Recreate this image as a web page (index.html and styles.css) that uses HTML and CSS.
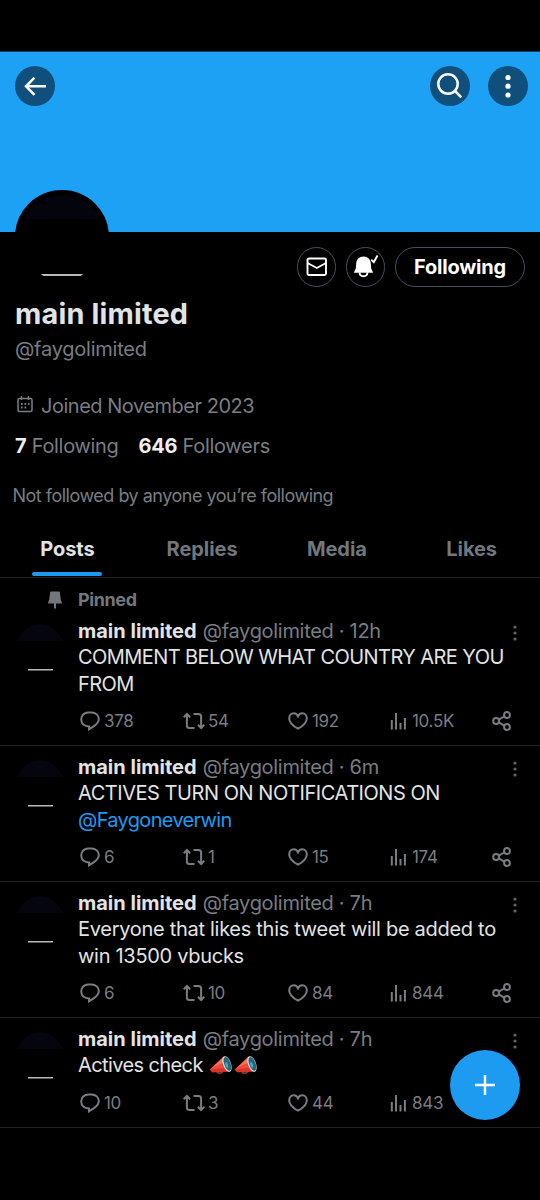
FILE: index.html
```html
<!DOCTYPE html>
<html lang="en">
<head>
<meta charset="utf-8">
<title>main limited (@faygolimited)</title>
<link rel="stylesheet" href="styles.css">
</head>
<body>
<svg class="sprite" aria-hidden="true">
  <symbol id="reply" viewBox="0 0 20 20"><path d="M9 15.400C4.200 15.300 1.200 12.600 1.200 8.600c0-4.100 3-7.100 7.300-7.100h3c4.300 0 7.300 2.800 7.300 6.600 0 3.300-2.300 5.400-4.800 7L9 18.300z"/></symbol>
  <symbol id="repost" viewBox="0 0 22 18"><path d="M.7 5.200 3.900 2l3.200 3.200M3.900 2.200v11.300q0 2.500 2.500 2.500h5.100M10.500 2h5.100q2.500 0 2.500 2.500v11.300M14.900 12.800l3.200 3.200 3.200-3.200"/></symbol>
  <symbol id="heart" viewBox="0 0 20 18"><path d="M10 16.700C5 13.900 1.200 10.500 1.200 6.400c0-3 2-5.100 4.500-5.100 1.800 0 3.300.9 4.300 2.900 1-2 2.500-2.900 4.300-2.900 2.500 0 4.500 2.100 4.500 5.100 0 4.100-3.800 7.500-8.800 10.300z"/></symbol>
  <symbol id="views" viewBox="0 0 17 18"><path d="M1.800 17.500V8M6 17.500V1M10.500 17.500v-6.500M14.900 17.500V6"/></symbol>
  <symbol id="share" viewBox="0 0 20 20"><path d="m6.700 8.700 5.600-3.200M6.700 11.400l5.600 3.200"/><circle cx="4.100" cy="10" r="2.900"/><circle cx="15" cy="4" r="2.900"/><circle cx="15" cy="16" r="2.900"/></symbol>
  <symbol id="more" viewBox="0 0 6 16"><circle cx="3" cy="2" r="1.600"/><circle cx="3" cy="8" r="1.600"/><circle cx="3" cy="14" r="1.600"/></symbol>
  <symbol id="horn" viewBox="0 0 24 20">
    <path d="M7.500 15q0 3.300 3 3.300t3.300-3" fill="none" stroke="#a9322b" stroke-width="1.500"/>
    <path d="M.6 14.500 14.500 1.500l6.500 14.800-17.500 1z" fill="#ef4a3a"/>
    <path d="m.6 14.500 2.900 2.800 17.500-1-2-4z" fill="#d8362c"/>
    <path d="m3.500 12.500 11-10 2 4z" fill="#ff7456"/>
    <ellipse cx="18" cy="9" rx="4" ry="8.200" transform="rotate(-20 18 9)" fill="#d8e3e8"/>
    <ellipse cx="18.400" cy="8.900" rx="3.200" ry="7.300" transform="rotate(-20 18.400 8.900)" fill="#25667d"/>
    <ellipse cx="17.600" cy="10" rx="1.300" ry="3" transform="rotate(-20 17.600 10)" fill="#4ca5b0"/>
  </symbol>
</svg>
<header class="banner">
  <button class="round" aria-label="Back"><svg width="40" height="40" viewBox="0 0 40 40"><path d="M31 20.300H11M19.500 11.700 11 20.300l8.500 8.600"/></svg></button>
  <span class="spacer"></span>
  <button class="round" aria-label="Search"><svg width="40" height="40" viewBox="0 0 40 40"><circle cx="18" cy="18" r="9.700"/><path d="m25 25 6.300 6.300"/></svg></button>
  <button class="round" aria-label="More"><svg class="dots" width="40" height="40" viewBox="0 0 40 40"><circle cx="20" cy="11.500" r="2.600"/><circle cx="20" cy="20.200" r="2.600"/><circle cx="20" cy="29" r="2.600"/></svg></button>
  <div class="profile-pic"><span></span></div>
</header>
<section class="profile">
  <div class="buttons">
    <button class="outline" aria-label="Message"><svg width="22" height="20" viewBox="0 0 22 20"><rect x="1.500" y="1.500" width="18.500" height="16.500" rx="1.500"/><path d="m1.500 6 9.250 5L20 6"/></svg></button>
    <button class="outline" aria-label="Notifications"><svg width="26" height="24" viewBox="0 0 26 24"><path fill="#fff" stroke="none" d="M10.500 1.500c4.500 0 7 3 7.300 7l.4 5 2 4.200H.8l2-4.200.4-5c.3-4 2.800-7 7.300-7z"/><path d="M6.500 17.500c.5 5 7.500 5 8 0M18.300 4.700l2.500 2.500L24.500.5" stroke-width="1.900"/></svg></button>
    <button class="outline wide">Following</button>
  </div>
  <h1>main limited</h1>
  <p class="handle">@faygolimited</p>
  <p class="joined"><svg width="16" height="17" viewBox="0 0 16 17"><rect x="1" y="2.500" width="14" height="13" rx="1.500"/><path d="M4.500 0v4M11.500 0v4"/><path stroke-width="2" stroke-dasharray="1.700 1.800" d="M4 8h8.500M4 11.500h5.500"/></svg><span>Joined November 2023</span></p>
  <p class="counts"><span><b>7</b> Following</span><span><b>646</b> Followers</span></p>
  <p class="mutual">Not followed by anyone you’re following</p>
</section>
<nav class="tabs"><a class="active"><span>Posts</span></a><a><span>Replies</span></a><a><span>Media</span></a><a><span>Likes</span></a></nav>
<main>
  <div class="pinned"><svg width="14" height="19" viewBox="0 0 14 19"><path d="M3 .5h8q.8 0 .9.800l.8 7 1.100 3v1.200H8v4.500l-1 1-1-1V12.500H.2v-1.200l1.100-3 .8-7Q2.200.5 3 .5z"/></svg><span>Pinned</span></div>
  <article class="post">
    <div class="avatar"></div>
    <div class="body">
      <div class="meta"><b>main limited</b><span>@faygolimited · 12h</span><svg class="more"><use href="#more"/></svg></div>
      <p class="text caps">COMMENT BELOW WHAT COUNTRY ARE YOU<br>FROM</p>
      <div class="actions"><span><svg class="i-reply"><use href="#reply"/></svg>378</span><span><svg class="i-repost"><use href="#repost"/></svg>54</span><span><svg class="i-heart"><use href="#heart"/></svg>192</span><span><svg class="i-views"><use href="#views"/></svg>10.5K</span><span><svg class="i-share"><use href="#share"/></svg></span></div>
    </div>
  </article>
  <article class="post">
    <div class="avatar"></div>
    <div class="body">
      <div class="meta"><b>main limited</b><span>@faygolimited · 6m</span><svg class="more"><use href="#more"/></svg></div>
      <p class="text"><span class="caps loose">ACTIVES TURN ON NOTIFICATIONS ON</span><br><a class="mention">@Faygoneverwin</a></p>
      <div class="actions"><span><svg class="i-reply"><use href="#reply"/></svg>6</span><span><svg class="i-repost"><use href="#repost"/></svg>1</span><span><svg class="i-heart"><use href="#heart"/></svg>15</span><span><svg class="i-views"><use href="#views"/></svg>174</span><span><svg class="i-share"><use href="#share"/></svg></span></div>
    </div>
  </article>
  <article class="post">
    <div class="avatar"></div>
    <div class="body">
      <div class="meta"><b>main limited</b><span>@faygolimited · 7h</span><svg class="more"><use href="#more"/></svg></div>
      <p class="text">Everyone that likes this tweet will be added to<br>win 13500 vbucks</p>
      <div class="actions"><span><svg class="i-reply"><use href="#reply"/></svg>6</span><span><svg class="i-repost"><use href="#repost"/></svg>10</span><span><svg class="i-heart"><use href="#heart"/></svg>84</span><span><svg class="i-views"><use href="#views"/></svg>844</span><span><svg class="i-share"><use href="#share"/></svg></span></div>
    </div>
  </article>
  <article class="post">
    <div class="avatar"></div>
    <div class="body">
      <div class="meta"><b>main limited</b><span>@faygolimited · 7h</span><svg class="more"><use href="#more"/></svg></div>
      <p class="text emoji-line"><span>Actives check</span><svg class="horn"><use href="#horn"/></svg><svg class="horn"><use href="#horn"/></svg></p>
      <div class="actions"><span><svg class="i-reply"><use href="#reply"/></svg>10</span><span><svg class="i-repost"><use href="#repost"/></svg>3</span><span><svg class="i-heart"><use href="#heart"/></svg>44</span><span><svg class="i-views"><use href="#views"/></svg>843</span></div>
    </div>
  </article>
</main>
<button class="compose" aria-label="New post"><svg width="20" height="20" viewBox="0 0 20 20"><path d="M10 0v20M0 10h20"/></svg></button>
</body>
</html>
```
FILE: styles.css
```css
* { box-sizing: border-box; }
body { margin: 0; padding-top: 51px; height: 1200px; overflow: hidden; background: #000; color: #e2e3e4; font: 20px/26px Inter, sans-serif; position: relative; }
h1, p { margin: 0; white-space: nowrap; }
button { font: inherit; color: #fff; padding: 0; border: 0; display: flex; align-items: center; justify-content: center; }
svg { display: block; flex: none; fill: none; stroke: currentColor; }
.sprite { position: absolute; width: 0; height: 0; }
.banner { position: relative; height: 180.500px; background: #1da1f4; border-top: 1px solid #0b4267; display: flex; gap: 17.5px; padding: 14px 12.5px 0 15px; overflow: hidden; }
.spacer { flex: 1; }
.round { width: 40px; height: 40px; border-radius: 50%; background: #104f7b; }
.round svg { stroke-width: 2.5; }
.round .dots { fill: #fff; stroke: none; }
.profile-pic { position: absolute; left: 15px; top: 137.500px; width: 94px; height: 94px; border-radius: 50%; border: 5px solid #000; background: #04040c; overflow: hidden; }
.profile-pic span { display: block; margin-top: 24px; height: 60px; background: #000; }
.profile { position: relative; height: 291px; padding: 15px 15px 0; color: #797d82; }
.profile::before { content: ""; position: absolute; left: 40px; top: 42px; width: 44px; height: 2.500px; background: #b9b9b9; clip-path: polygon(0 0, 100% 0, 92% 100%, 8% 100%); }
.buttons { display: flex; justify-content: flex-end; gap: 10px; }
.outline { width: 39px; height: 40px; background: #000; border: 1px solid #42515e; border-radius: 20px; }
.outline svg { stroke-width: 1.9; }
.outline.wide { width: 130px; font-weight: 700; letter-spacing: -.2px; }
h1 { font-size: 28.800px; line-height: 34px; font-weight: 700; color: #e2e3e4; margin-top: 10px; letter-spacing: .2px; }
.handle { margin-top: 5px; letter-spacing: -.23px; }
.joined { display: flex; align-items: center; gap: 8px; margin-top: 31px; padding-left: 2px; letter-spacing: -.48px; }
.joined svg { margin-top: -3px; stroke-width: 1.5; }
.counts { display: flex; gap: 20px; margin-top: 14px; letter-spacing: -.3px; }
.counts b { color: #eee; }
.mutual { font-size: 18px; margin: 24px 0 0 -2.500px; letter-spacing: -.5px; }
.tabs { height: 55px; display: grid; grid-template-columns: repeat(4, 1fr); border-bottom: 1px solid #202224; font-weight: 700; color: #72777c; letter-spacing: -.05px; padding: 13px 1px 0 0; }
.tabs a { display: flex; flex-direction: column; align-items: center; }
.tabs .active { color: #e2e3e4; }
.tabs .active::after { content: ""; width: 70px; height: 4px; border-radius: 2px; background: #1d9bf0; margin-top: 10.500px; }
.pinned { height: 32.500px; display: flex; gap: 16px; padding: 9.500px 0 0 48px; color: #72777c; font-weight: 700; font-size: 18px; letter-spacing: -.4px; }
.pinned svg { fill: currentColor; stroke: none; margin-top: 4px; }
.post { display: flex; border-bottom: 1px solid #202224; padding: 8px 0 11px 17px; }
.avatar { width: 46px; height: 48px; border-radius: 23px 23px 0 0; margin: 6px 15px 0 0; background: linear-gradient(#b9b9b9, #b9b9b9) 11px 44.500px / 25px 1.500px no-repeat, linear-gradient(#05050d 17px, #000 17px); }
.body { flex: 1; min-width: 0; }
.meta { display: flex; gap: 6px; height: 26px; color: #797d82; white-space: nowrap; }
.meta span { letter-spacing: -.3px; }
.meta b { color: #e2e3e4; }
.more { width: 6px; height: 16px; margin: 6.500px 22px 0 auto; fill: #606468; stroke: none; }
.text { line-height: 26.500px; letter-spacing: -.29px; }
.caps { letter-spacing: -.57px; }
.caps.loose { letter-spacing: -.46px; }
.mention { color: #1d9bf0; letter-spacing: -.67px; }
.emoji-line { display: flex; align-items: center; }
.emoji-line span { margin-right: 6px; letter-spacing: -.6px; }
.horn { width: 24px; height: 20px; stroke: none; margin-right: 1px; }
.actions { height: 26px; margin-top: 11px; display: grid; grid-template-columns: 104px 105px 101px 104px 1fr; font-size: 17px; letter-spacing: -.3px; color: #797d82; }
.actions span { display: flex; align-items: center; gap: 4px; }
.actions svg { stroke-width: 2; }
.i-reply { width: 20px; height: 20px; margin-left: 2px; }
.i-repost { width: 22px; height: 18px; margin-left: 1px; }
.actions .i-repost { margin-right: -1px; }
.i-heart { width: 20px; height: 18px; margin-left: 1px; }
.i-views { width: 17px; height: 18px; margin-left: 1.500px; }
.actions .i-views { margin-right: 1.500px; }
.i-share { width: 20px; height: 20px; }
.compose { position: absolute; left: 450px; top: 1050px; width: 70px; height: 70px; border-radius: 50%; background: #1d9bf0; }
.compose svg { stroke-width: 2.4; }
```
